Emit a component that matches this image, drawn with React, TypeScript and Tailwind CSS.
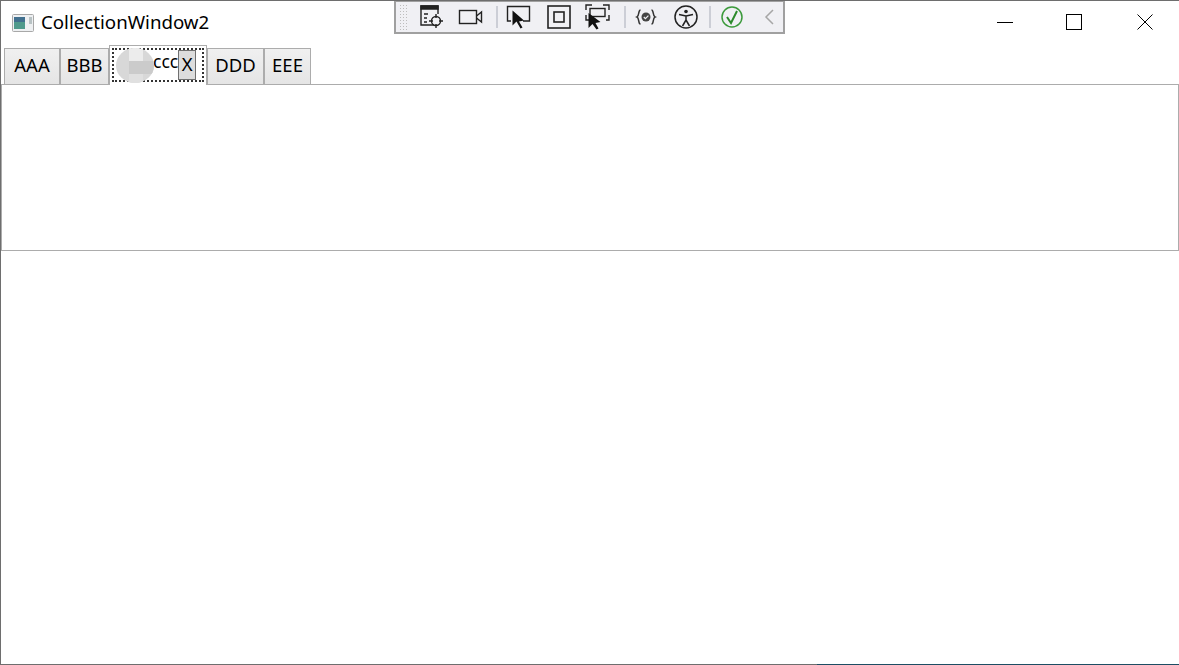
import React from "react";

const font = "font-['Noto_Sans','Liberation_Sans',sans-serif]";

function Tab({ label, className }: { label: string; className: string }) {
  return (
    <div
      className={`flex h-[36px] items-center justify-center border border-b-0 border-[#acacac] bg-gradient-to-b from-[#f0f0f0] to-[#e5e5e5] pb-[2px] text-[18.5px] leading-none text-black ${className}`}
    >
      {label}
    </div>
  );
}

function Toolbar() {
  return (
    <div className="absolute left-[393px] top-0 flex h-[33px] w-[391px] items-center border-2 border-t-[1px] border-[#a0a0a0] bg-[#f0f0f4]">
      {/* grip */}
      <div className="ml-[3px] h-[27px] w-[10px] bg-[radial-gradient(#bdbdbd_1px,transparent_1px)] bg-[length:3px_3px]" />
      <svg width="26" height="26" viewBox="0 0 26 26" className="ml-[10px]" fill="none" stroke="#222" strokeWidth="1.4">
        <path d="M15 21H2V2h17v8" />
        <path d="M2 2h17v3H2z" fill="#222" />
        <path d="M5 10h4M5 14h3M5 18h3" />
        <circle cx="17" cy="17" r="4.5" />
        <path d="M17 10v4M17 20v4M10 17h4M20 17h4" />
      </svg>
      <svg width="26" height="20" viewBox="0 0 26 20" className="ml-[13px]" fill="none" stroke="#222" strokeWidth="1.4">
        <rect x="1.5" y="3.5" width="17" height="13" />
        <path d="M18.5 9l5-4v10l-5-4" />
      </svg>
      <div className="ml-[12px] h-[22px] w-[2px] bg-[#ccced6]" />
      <svg width="26" height="26" viewBox="0 0 26 26" className="ml-[8px]" fill="none" stroke="#222" strokeWidth="1.4">
        <path d="M5 17H1.5V2.5h22V17H17" />
        <path d="M6.500 6.500l0 15 4-4 4 7 2-1-3.500-6 5-1z" fill="#111" stroke="none" />
      </svg>
      <svg width="24" height="24" viewBox="0 0 24 24" className="ml-[15px]" fill="none" stroke="#222" strokeWidth="1.6">
        <rect x="1" y="1" width="22" height="22" />
        <rect x="7" y="7" width="10" height="10" />
      </svg>
      <svg width="26" height="26" viewBox="0 0 26 26" className="ml-[14px]" fill="none" stroke="#222" strokeWidth="1.4">
        <path d="M1 6V1h6M18 1h6v5M1 11v5h3M24 11v5h-3" />
        <rect x="5" y="4.500" width="15" height="8" />
        <path d="M3.500 9l0 15 4-4 4 5.500 2-1-3-5.500 5-1z" fill="#111" stroke="none" />
      </svg>
      <div className="ml-[13px] h-[22px] w-[2px] bg-[#ccced6]" />
      <svg width="22" height="18" viewBox="0 0 22 18" className="ml-[9px]" fill="none" stroke="#333" strokeWidth="1.5">
        <path d="M5.500 2C3 2 4.500 8 2 9c2.500 1 1 7 3.500 7M16.500 2c2.500 0 1 6 3.500 7-2.500 1-1 7-3.500 7" />
        <circle cx="11" cy="9" r="4.500" fill="#444" stroke="none" />
        <path d="M8.800 9l1.600 1.600 3-3" stroke="#f0f0f4" strokeWidth="1.200" />
      </svg>
      <svg width="26" height="26" viewBox="0 0 26 26" className="ml-[16px]" fill="none" stroke="#222" strokeWidth="1.5">
        <circle cx="13" cy="13" r="11" />
        <circle cx="13" cy="7.500" r="1.800" fill="#222" stroke="none" />
        <path d="M6 10.500l7 1.500 7-1.500M13 12v4M13 16l-3.500 6M13 16l3.500 6" />
      </svg>
      <div className="ml-[10px] h-[22px] w-[2px] bg-[#ccced6]" />
      <svg width="24" height="24" viewBox="0 0 24 24" className="ml-[9px]" fill="none">
        <circle cx="12" cy="12" r="10" stroke="#3c9a3c" strokeWidth="1.500" />
        <path d="M7 12l4 6 6-12" stroke="#2c8a2c" strokeWidth="2" />
      </svg>
      <svg width="12" height="18" viewBox="0 0 12 18" className="ml-[19px]" fill="none" stroke="#a6a6a6" strokeWidth="1.500">
        <path d="M10 2L3 9l7 7" />
      </svg>
    </div>
  );
}

export default function App() {
  return (
    <div className={`relative flex h-[665px] w-[1179px] flex-col overflow-hidden border-t border-l border-[#6e6e6e] bg-white ${font}`}>
      {/* title bar */}
      <div className="flex h-[43px] items-center">
        <svg width="22" height="18" viewBox="0 0 22 18" className="ml-[11px]">
          <rect x="0.500" y="0.500" width="21" height="17" rx="1" fill="#eef0f2" stroke="#a8a8a8" />
          <rect x="2" y="3" width="11" height="12" fill="#4f9a8c" />
          <rect x="2" y="3" width="11" height="5" fill="#41708f" />
          <rect x="17" y="3" width="3" height="7" fill="#b8c2c4" />
        </svg>
        <span className="ml-[7px] text-[18.7px] leading-none text-black">CollectionWindow2</span>
        <div className="ml-auto mb-[2px] flex items-center">
          <svg width="16" height="16" viewBox="0 0 16 16" stroke="#000" fill="none" className="mr-[53px]">
            <path d="M0 8.500h16" />
          </svg>
          <svg width="16" height="16" viewBox="0 0 16 16" stroke="#000" fill="none" className="mr-[55px]">
            <rect x="0.500" y="0.500" width="15" height="15" />
          </svg>
          <svg width="16" height="16" viewBox="0 0 16 16" stroke="#000" fill="none" className="mr-[26px]">
            <path d="M0.500 0.500l15 15M15.500 0.500l-15 15" />
          </svg>
        </div>
      </div>

      {/* tabs */}
      <div className="flex h-[40px] items-end pl-[3px]">
        <Tab label="AAA" className="w-[56px]" />
        <Tab label="BBB" className="w-[49px]" />
        <div className="relative z-10 -mb-px h-[40px] w-[98px] border border-b-0 border-[#acacac] bg-white p-[2px]">
          <div className="flex h-[34px] items-center border-2 border-dotted border-[#333]">
            <div className="w-[39px]" />
            <span className="-mt-[7px] text-[17.5px] leading-none text-black">ccc</span>
            <div className="flex h-[30px] w-[18px] items-center justify-center border border-[#707070] bg-[#dddddd] pb-[2px] text-[18.5px] leading-none text-black">
              X
            </div>
          </div>
          {/* blurred blob over the tab header */}
          <div className="absolute left-[6px] top-[2px] flex h-[35px] w-[38px] flex-col overflow-hidden rounded-[50%] bg-[#d8d8d8]">
            <div className="ml-[13px] h-[13px] w-[14px] bg-[#ececec]" />
            <div className="ml-[13px] h-[13px] w-[26px] bg-[#cbcbcb]" />
            <div className="ml-[13px] h-[9px] w-[14px] bg-[#e0e0e0]" />
          </div>
        </div>
        <Tab label="DDD" className="w-[57px]" />
        <Tab label="EEE" className="w-[47px]" />
      </div>

      {/* tab content */}
      <div className="h-[167px] border border-[#acacac] bg-white" />
      <div className="flex-1" />
      <div className="flex h-px">
        <div className="w-[816px] bg-[#6e6e6e]" />
        <div className="flex-1 bg-[#1d4d63]" />
      </div>

      <Toolbar />
    </div>
  );
}
